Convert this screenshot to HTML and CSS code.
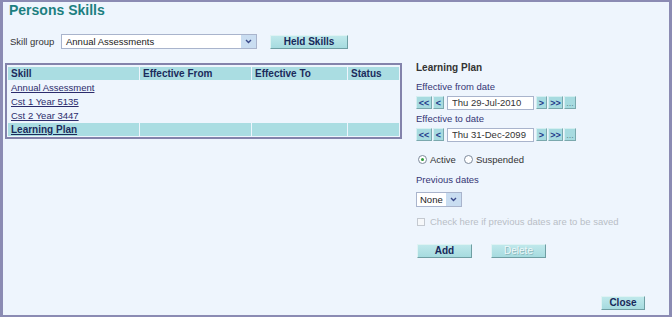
FILE: index.html
```html
<!DOCTYPE html>
<html lang="en">
<head>
  <meta charset="UTF-8" />
  <title>Persons Skills</title>
  <link rel="stylesheet" href="styles.css">
</head>
<body>
  <div class="frame">
    <h1 class="title">Persons Skills</h1>

    <!-- skill group selector -->
    <div class="toolbar">
      <span class="lbl">Skill group</span>
      <div class="select group-select">
        <span class="select-text">Annual Assessments</span>
        <span class="arrow"><svg width="7" height="5" viewBox="0 0 7 5"><path d="M1 1 L3.5 3.5 L6 1" fill="none" stroke="#3a4a8a" stroke-width="1.4"/></svg></span>
      </div>
      <button class="btn held">Held Skills</button>
    </div>

    <div class="main">
      <div class="grid-box">
        <table class="grid">
          <tr>
            <th class="c1">Skill</th>
            <th class="c2">Effective From</th>
            <th class="c3">Effective To</th>
            <th class="c4">Status</th>
          </tr>
          <tr><td><a href="#">Annual Assessment</a></td><td></td><td></td><td></td></tr>
          <tr><td><a href="#">Cst 1 Year 5135</a></td><td></td><td></td><td></td></tr>
          <tr><td><a href="#">Cst 2 Year 3447</a></td><td></td><td></td><td></td></tr>
          <tr class="sel"><td><a href="#">Learning Plan</a></td><td></td><td></td><td></td></tr>
        </table>
      </div>

      <div class="panel">
        <h2>Learning Plan</h2>

        <div class="field-lbl">Effective from date</div>
        <div class="date-row">
          <button class="nav">&lt;&lt;</button>
          <button class="nav one">&lt;</button>
          <input class="date" type="text" value="Thu 29-Jul-2010">
          <button class="nav one">&gt;</button>
          <button class="nav">&gt;&gt;</button>
          <button class="nav dots">...</button>
        </div>

        <div class="field-lbl second">Effective to date</div>
        <div class="date-row">
          <button class="nav">&lt;&lt;</button>
          <button class="nav one">&lt;</button>
          <input class="date" type="text" value="Thu 31-Dec-2099">
          <button class="nav one">&gt;</button>
          <button class="nav">&gt;&gt;</button>
          <button class="nav dots">...</button>
        </div>

        <div class="radios">
          <span class="radio on"></span><span class="radio-lbl">Active</span>
          <span class="radio"></span><span class="radio-lbl">Suspended</span>
        </div>

        <div class="field-lbl prev">Previous dates</div>
        <div class="select small-select">
          <span class="select-text">None</span>
          <span class="arrow"><svg width="7" height="5" viewBox="0 0 7 5"><path d="M1 1 L3.5 3.5 L6 1" fill="none" stroke="#3a4a8a" stroke-width="1.4"/></svg></span>
        </div>

        <div class="check-row">
          <span class="check"></span>
          <span>Check here if previous dates are to be saved</span>
        </div>

        <div class="actions">
          <button class="btn act">Add</button>
          <button class="btn act off">Delete</button>
        </div>
      </div>
    </div>

    <div class="footer">
      <button class="btn close">Close</button>
    </div>
  </div>
</body>
</html>
```

FILE: styles.css
```css
* {
  box-sizing: border-box;
  margin: 0;
  padding: 0;
}

body {
  font-family: "Liberation Sans", Arial, sans-serif;
  font-size: 10px;
  color: #333;
  background: #fff;
}

.frame {
  height: 317px;
  border: 2px solid #8b8bb3;
  border-left-width: 3px;
  border-right-width: 3px;
  background: #eef5fd;
  display: flex;
  flex-direction: column;
}

.title {
  font-size: 14px;
  font-weight: bold;
  color: #1d7f80;
  line-height: 16px;
  margin: 0 0 0 6px;
}

/* Toolbar */
.toolbar {
  display: flex;
  align-items: center;
  margin-top: 16px;
  height: 15px;
}

.lbl {
  margin-left: 7px;
  width: 51px;
  color: #333;
  font-size: 9.5px;
}

.select {
  display: flex;
  align-items: center;
  height: 15px;
  background: #fff;
  border: 1px solid #a9b4cc;
}

.select-text {
  flex: 1;
  padding-left: 4px;
  color: #222;
  font-size: 9.5px;
}

.arrow {
  width: 15px;
  height: 13px;
  background: #c9ddf1;
  display: flex;
  align-items: center;
  justify-content: center;
}

.group-select {
  width: 196px;
}

.btn {
  font-family: "Liberation Sans", Arial, sans-serif;
  font-weight: bold;
  font-size: 10px;
  color: #17285a;
  background: linear-gradient(#bfe8eb, #a6dbdf);
  border: 1px solid;
  border-color: #dff3f4 #6f9ea3 #6f9ea3 #dff3f4;
  height: 14px;
  line-height: 12px;
}

.held {
  width: 78px;
  margin-left: 13px;
}

/* Main area */
.main {
  display: flex;
  margin-top: 14px;
}

.grid-box {
  width: 397px;
  height: 76px;
  margin-left: 2px;
  border: 2px solid #8383ab;
}

.grid {
  width: 100%;
  border-spacing: 1px;
  margin-top: 1px;
}

.grid th,
.grid td {
  height: 13px;
  padding: 0 3px;
  text-align: left;
  line-height: 12px;
}

.grid th {
  background: #aadde2;
  color: #1b2b5c;
  font-size: 10px;
}

.grid td {
  font-size: 9.5px;
}

.grid .c1 { width: 131px; }
.grid .c2 { width: 111px; }
.grid .c3 { width: 95px; }

.grid a {
  color: #2c2c6c;
}

.grid tr.sel td {
  background: #aadde2;
}

.grid tr.sel a {
  font-weight: bold;
  font-size: 10px;
  color: #1b2b5c;
}

/* Right panel */
.panel {
  margin-left: 14px;
  width: 240px;
  font-size: 9.5px;
}

.panel h2 {
  font-size: 10px;
  font-weight: bold;
  color: #333;
  line-height: 12px;
  margin-top: -1px;
}

.field-lbl {
  color: #353575;
  line-height: 12px;
  margin-top: 7px;
}

.field-lbl.second {
  margin-top: 4px;
}

.date-row {
  display: flex;
  align-items: center;
  margin-top: 3px;
  height: 13px;
}

.nav {
  font-family: "Liberation Sans", Arial, sans-serif;
  font-size: 9px;
  font-weight: bold;
  color: #233a8a;
  background: #a7dbe0;
  border: 1px solid;
  border-color: #d5eff1 #7aa8ad #7aa8ad #d5eff1;
  width: 16px;
  height: 13px;
  line-height: 10px;
  margin-right: 1px;
  padding: 0;
}

.nav.one {
  width: 11px;
}

.nav.one + .nav {
  width: 15px;
}

.nav.dots {
  width: 12px;
  color: #5f8990;
  font-weight: normal;
  font-size: 9px;
  line-height: 10px;
}

.date {
  font-family: "Liberation Sans", Arial, sans-serif;
  font-size: 9.5px;
  color: #333;
  width: 87px;
  height: 14px;
  border: 1px solid #a9b4cc;
  background: #fff;
  padding-left: 4px;
  margin: 0 2px 0 2px;
}

.radios {
  display: flex;
  align-items: center;
  margin-top: 12px;
  margin-left: 2px;
  height: 12px;
}

.radio {
  width: 9px;
  height: 9px;
  border: 1px solid #7d8a9c;
  border-radius: 50%;
  background: #fff;
  display: flex;
  align-items: center;
  justify-content: center;
}

.radio.on::after {
  content: "";
  width: 3px;
  height: 3px;
  border-radius: 50%;
  background: #2f9a3a;
}

.radio-lbl {
  margin-left: 3px;
  margin-right: 8px;
  color: #333;
}

.field-lbl.prev {
  margin-top: 9px;
}

.small-select {
  width: 46px;
  margin-top: 6px;
}

.small-select .select-text {
  padding-left: 3px;
}

.check-row {
  display: flex;
  align-items: center;
  margin-top: 9px;
  color: #b9bec6;
}

.check {
  width: 8px;
  height: 8px;
  border: 1px solid #c4c9d0;
  background: #f6f8fa;
  margin: 0 5px 0 1px;
}

.actions {
  display: flex;
  margin-top: 17px;
  margin-left: 1px;
}

.act {
  width: 55px;
}

.act.off {
  margin-left: 19px;
  color: #eef8f9;
  font-weight: normal;
  text-shadow: 1px 1px 0 #8fb9bd;
}

/* Footer */
.footer {
  margin-top: auto;
  display: flex;
  justify-content: flex-end;
  padding: 0 24px 5px 0;
}

.close {
  width: 44px;
}
```
